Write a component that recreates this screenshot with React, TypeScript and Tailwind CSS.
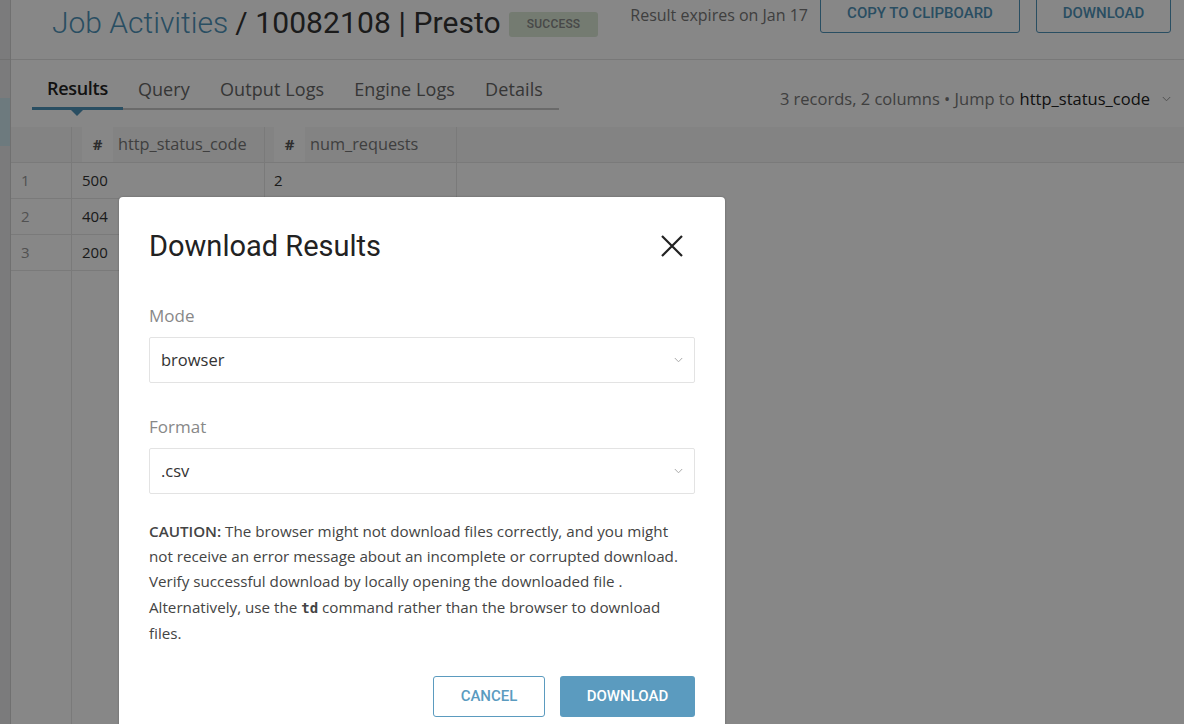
import React from "react";

const Chevron = ({ className = "" }: { className?: string }) => (
  <svg className={className} width="9" height="6" viewBox="0 0 9 6" fill="none">
    <path d="M0.8 1 L4.5 4.8 L8.2 1" stroke="currentColor" strokeWidth="1" />
  </svg>
);

const Hash = () => (
  <div className="w-[31px] h-full flex items-center justify-center bg-white text-[15px] font-bold text-[#555]">#</div>
);

export default function App() {
  const rows = [
    ["1", "500", "2"],
    ["2", "404", ""],
    ["3", "200", ""],
  ];
  return (
    <div className="relative w-[1184px] h-[724px] overflow-hidden bg-white flex font-['Open_Sans',sans-serif] text-[#333]">
      {/* sidebar */}
      <div className="w-[11px] shrink-0 bg-[#e9e9ea] border-r border-[#d4d4d4] flex flex-col">
        <div className="h-[60px] border-b border-[#d6d6d6]" />
        <div className="h-[38px]" />
        <div className="h-[48px] bg-[#cfe6ee]" />
      </div>
      {/* main */}
      <div className="flex-1 flex flex-col min-w-0">
        {/* header */}
        <div className="h-[60px] shrink-0 border-b border-[#e3e3e3] flex items-start pl-[41px] pr-[13px]">
          <div className="pt-[5px] flex items-center font-['Roboto',sans-serif] font-light text-[30px] leading-[36px] text-[#333]">
            <span className="text-[#4f93b9]">Job Activities</span>
            <span className="ml-[7px] font-normal tracking-[0.1px]">/ 10082108 | Presto</span>
            <span className="ml-[8px] mt-[2px] h-[25px] px-[18px] rounded-[3px] bg-[#dbe8d6] text-[#888] text-[12px] font-medium tracking-[0.2px] flex items-center">SUCCESS</span>
          </div>
          <div className="ml-auto flex items-start">
            <span className="text-[16px] text-[#777] pt-[3px] mr-[12px]">Result expires on Jan 17</span>
            <button className="-mt-[8px] h-[41px] w-[200px] border border-[#4f93b9] rounded-[3px] text-[#4f93b9] font-['Roboto',sans-serif] font-medium text-[15px] pt-[1px]">COPY TO CLIPBOARD</button>
            <button className="-mt-[8px] ml-[16px] h-[41px] w-[135px] border border-[#4f93b9] rounded-[3px] text-[#4f93b9] font-['Roboto',sans-serif] font-medium text-[15px] pt-[1px]">DOWNLOAD</button>
          </div>
        </div>
        {/* tabs row */}
        <div className="h-[67px] shrink-0 flex items-start pl-[21px] pr-[13px]">
          <div className="relative mt-[15px] flex border-b-2 border-[#c8c8c8] text-[18px] text-[#666]">
            <div className="relative px-[15px] pb-[5px] text-[#222] font-semibold tracking-[-0.3px] border-b-[3px] border-[#4f93b9] -mb-[2px]">
              Results
              <span className="absolute left-1/2 -translate-x-1/2 -bottom-[9px] w-0 h-0 border-l-[6px] border-r-[6px] border-t-[6px] border-l-transparent border-r-transparent border-t-[#4f93b9]" />
            </div>
            <div className="px-[15px] pb-[5px] pt-[1px] tracking-[0.1px]">Query</div>
            <div className="px-[15px] pb-[5px] pt-[1px] tracking-[0.1px]">Output Logs</div>
            <div className="px-[15px] pb-[5px] pt-[1px] tracking-[0.1px]">Engine Logs</div>
            <div className="pl-[15px] pr-[16px] pb-[5px] pt-[1px] tracking-[0.1px]">Details</div>
          </div>
          <div className="ml-auto mt-[27px] flex items-center text-[16.5px] text-[#777]">
            <span>3 records, 2 columns • Jump to </span>
            <span className="ml-[5px] text-[#222]">http_status_code</span>
            <Chevron className="ml-[12px] text-[#999]" />
          </div>
        </div>
        {/* table */}
        <div className="flex-1 flex flex-col text-[15px]">
          <div className="h-[36px] flex bg-[#f7f7f7] border-b border-[#e6e6e6]">
            <div className="w-[61px] border-r border-[#e6e6e6]" />
            <div className="w-[193px] border-r border-[#e6e6e6] flex items-center pl-[10px]">
              <Hash />
              <span className="ml-[5px] text-[#777] text-[16.3px]">http_status_code</span>
            </div>
            <div className="w-[192px] border-r border-[#e6e6e6] flex items-center pl-[9px]">
              <Hash />
              <span className="ml-[5px] text-[#777] text-[16.3px]">num_requests</span>
            </div>
          </div>
          {rows.map((r) => (
            <div key={r[0]} className="h-[36px] flex">
              <div className="w-[61px] border-r border-b border-[#e6e6e6] flex items-center pl-[10px] text-[#999]">{r[0]}</div>
              <div className="w-[193px] border-r border-b border-[#e6e6e6] flex items-center pl-[10px]">{r[1]}</div>
              <div className="w-[192px] border-r border-b border-[#e6e6e6] flex items-center pl-[9px]">{r[2]}</div>
            </div>
          ))}
          <div className="flex-1 flex">
            <div className="w-[61px] border-r border-[#e6e6e6]" />
            <div className="w-[193px] border-r border-[#e6e6e6]" />
            <div className="w-[192px] border-r border-[#e6e6e6]" />
          </div>
        </div>
      </div>

      {/* overlay */}
      <div className="absolute inset-0 bg-[rgba(0,0,0,0.47)]" />

      {/* modal */}
      <div className="absolute left-[119px] top-[197px] w-[606px] h-[560px] bg-white rounded-[4px] shadow-[0_0_2px_rgba(0,0,0,0.3)] px-[30px]">
        <div className="flex items-center justify-between pt-[31px]">
          <h2 className="font-['Roboto',sans-serif] text-[29px] leading-[36px] text-[#222]">Download Results</h2>
          <svg width="24" height="24" viewBox="0 0 24 24" className="mr-[11px]">
            <path d="M2 2 L22 22 M22 2 L2 22" stroke="#222" strokeWidth="2.2" />
          </svg>
        </div>
        <div className="mt-[41px] text-[17px] text-[#888] leading-[22px]">Mode</div>
        <div className="mt-[10px] h-[46px] border border-[#e3e3e3] rounded-[2px] flex items-center pl-[11px] pr-[11px] text-[16.5px] text-[#333]">
          <span>browser</span>
          <Chevron className="ml-auto text-[#aaa]" />
        </div>
        <div className="mt-[33px] text-[17px] text-[#888] leading-[22px]">Format</div>
        <div className="mt-[10px] h-[46px] border border-[#e3e3e3] rounded-[2px] flex items-center pl-[11px] pr-[11px] text-[16.5px] text-[#333]">
          <span>.csv</span>
          <Chevron className="ml-auto text-[#aaa]" />
        </div>
        <p className="mt-[25px] text-[15.2px] leading-[25.2px] text-[#444]">
          <span className="font-semibold">CAUTION:</span> The browser might not download files correctly, and you might not receive an error message about an incomplete or corrupted download. Verify successful download by locally opening the downloaded file . Alternatively, use the{" "}
          <code className="font-['DejaVu_Sans_Mono',monospace] font-bold text-[14px]">td</code> command rather than the browser to download files.
        </p>
        <div className="mt-[30px] flex justify-end gap-[15px]">
          <button className="h-[41px] w-[112px] border border-[#5b9bbf] rounded-[3px] text-[#5b9bbf] font-['Roboto',sans-serif] font-medium text-[15px]">CANCEL</button>
          <button className="h-[41px] w-[135px] bg-[#5b9bbf] rounded-[3px] text-white font-['Roboto',sans-serif] font-medium text-[15px]">DOWNLOAD</button>
        </div>
      </div>
    </div>
  );
}
